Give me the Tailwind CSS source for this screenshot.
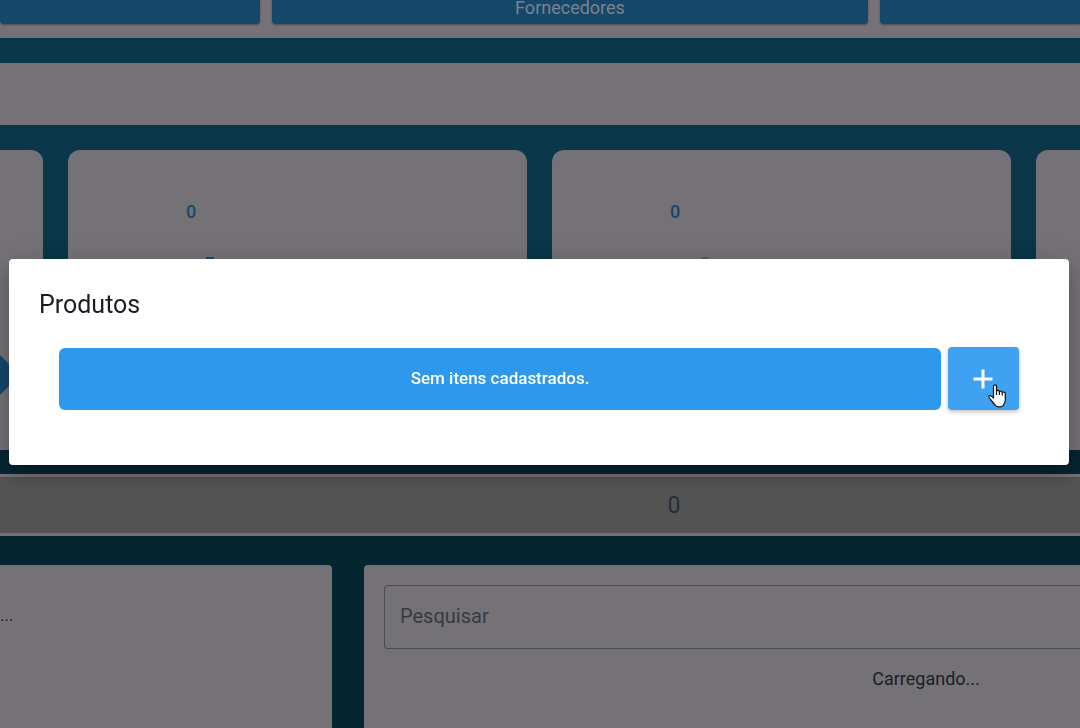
<!DOCTYPE html>
<html lang="pt-BR">
<head>
<meta charset="utf-8">
<meta name="viewport" content="width=device-width, initial-scale=1">
<title>Produtos</title>
<script src="https://cdn.jsdelivr.net/npm/@tailwindcss/browser@4"></script>
</head>
<body class="h-screen overflow-hidden bg-[#052531] font-[Roboto,sans-serif] text-[17px] text-[#1b1d26]">
<div class="flex h-full flex-col" inert>
  <nav class="grid h-[38px] shrink-0 grid-cols-[260fr_596fr_200fr] grid-rows-[24px] gap-3 bg-[#757277]">
    <button class="rounded-b bg-[#15476b] shadow-[0_1px_2px_#4c4b50]" aria-label="Produtos"></button>
    <button class="flex items-end justify-center rounded-b bg-[#15476b] pb-1 text-lg leading-6 text-[#7d828b] shadow-[0_1px_2px_#4c4b50]">Fornecedores</button>
    <button class="rounded-bl bg-[#15476b] shadow-[0_1px_2px_#4c4b50]" aria-label="Clientes"></button>
  </nav>
  <main class="flex min-h-0 grow flex-col bg-[#0a384a] pt-[25px]">
    <section class="h-[62px] shrink-0 bg-[#757277]"></section>
    <section class="grid h-[349px] shrink-0 grid-cols-[43fr_459fr_459fr_44fr] gap-[25px] bg-linear-to-b from-[#0a384a] from-30% to-[#052531] to-90% pt-[25px] pb-6">
      <article class="rounded-tr-xl bg-[#757277] pt-[205px]">
        <svg class="h-10 w-5" viewBox="0 0 20 40" fill="#15476b"><path d="M0 0 20 20 0 40Z"/></svg>
      </article>
      <article class="rounded-t-xl bg-[#757277] pt-12 pr-[213px]">
        <p class="text-center text-lg leading-7 font-medium text-[#15476b]">0</p>
        <div class="mt-[31px] ml-[138px] h-[2px] w-2 bg-[#15476b]"></div>
      </article>
      <article class="rounded-t-xl bg-[#757277] pt-12 pr-[213px]">
        <p class="text-center text-lg leading-7 font-medium text-[#15476b]">0</p>
        <div class="mt-[31px] ml-[150px] h-[2px] w-[6px] bg-[#4b5a6c]"></div>
      </article>
      <article class="rounded-tl-xl bg-[#757277]"></article>
    </section>
    <section class="grid h-[62px] shrink-0 grid-cols-[268fr_812fr] items-center border-y-[3px] border-[#757277] bg-[#535353] pt-[2px]">
      <span></span>
      <span class="text-center text-[23px] leading-7 text-[#242c3a]">0</span>
    </section>
    <section class="grid min-h-0 grow grid-cols-[332fr_716fr] gap-8 bg-[#052531] pt-[29px]">
      <article class="rounded-tr bg-[#757277] pt-9"><p class="leading-7">...</p></article>
      <article class="flex flex-col rounded-tl bg-[#757277] pt-5 pl-5">
        <input type="text" placeholder="Pesquisar" aria-label="Pesquisar" class="h-16 w-full rounded-l border border-r-0 border-[#4c4c50] bg-transparent px-[15px] pb-[2px] text-xl text-[#2d3038] placeholder:text-[#373a41]">
        <p class="mt-4 pl-[388px] text-center text-lg leading-7">Carregando...</p>
      </article>
    </section>
  </main>
</div>

<div class="fixed inset-0 flex items-center justify-center pr-[11px] pb-1 pl-[9px]">
  <section role="dialog" aria-modal="true" aria-labelledby="dialog-title" class="w-full rounded bg-white px-[30px] pt-[31px] pb-[55px] shadow-[0_10px_18px_rgba(0,0,0,0.2),0_4px_30px_rgba(0,0,0,0.12)]">
    <h1 id="dialog-title" class="text-[25px] leading-[30px]">Produtos</h1>
    <div class="mt-[27px] flex items-center gap-[7px] px-5">
      <button class="h-[62px] grow rounded-md bg-[#2d98ec] font-medium text-white">Sem itens cadastrados.</button>
      <button aria-label="Adicionar produto" class="relative flex h-[63px] w-[71px] shrink-0 cursor-pointer items-center justify-center rounded bg-[#3ea1f1] pr-[2px] shadow-[0_2px_4px_rgba(0,0,0,0.25)]">
        <svg class="size-5" viewBox="0 0 20 20" stroke="#fff" stroke-width="3" fill="none"><path d="M10 .5v19M.5 10h19"/></svg>
        <svg class="absolute top-[37px] left-10 h-6 w-5" viewBox="0 0 20 24" fill="#fff" stroke="#111" stroke-width="1.2" stroke-linejoin="round"><path d="M5.5 14V2.2C5.5.3 8.5.3 8.5 2.2V7c.8-1 2.6-.7 2.9.6.9-.8 2.6-.5 2.8.8 1-.8 3.1-.2 3.1 1.3V16c0 2-.8 3.4-1.6 4.6V21c-1.6 2.6-7.3 2.6-8.7 0L2.5 15.5C1.2 13.8.3 12.6 1 11.9c.9-.8 3 .3 4.5 2.1Z"/><path d="M8.5 7v4M11.4 7.6V11M14.2 8.4V11.5"/></svg>
      </button>
    </div>
  </section>
</div>
</body>
</html>
